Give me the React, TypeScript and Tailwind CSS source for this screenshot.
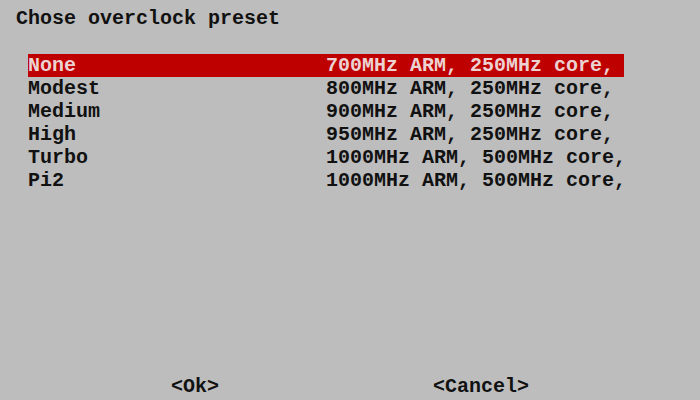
const presets = [
  { name: "None", desc: "700MHz ARM, 250MHz core," },
  { name: "Modest", desc: "800MHz ARM, 250MHz core," },
  { name: "Medium", desc: "900MHz ARM, 250MHz core," },
  { name: "High", desc: "950MHz ARM, 250MHz core," },
  { name: "Turbo", desc: "1000MHz ARM, 500MHz core," },
  { name: "Pi2", desc: "1000MHz ARM, 500MHz core," },
];

export default function App() {
  return (
    <div
      className="w-[700px] h-[400px] bg-[#bdbdbd] text-[#111] flex flex-col font-bold text-[20px] leading-[23px] whitespace-pre"
      style={{ fontFamily: '"Liberation Mono", "Courier New", monospace' }}
    >
      <div className="pl-[16px] pt-[7px]">Chose overclock preset</div>

      <div className="pl-[28px] mt-[24px] flex flex-col">
        {presets.map((p, i) => (
          <div
            key={p.name}
            className={
              i === 0
                ? "w-[596px] flex bg-[#bf0000] text-[#ecd2d2]"
                : "w-[596px] flex"
            }
          >
            <span className="w-[298px] shrink-0">{p.name}</span>
            <span className="shrink-0">{p.desc}</span>
          </div>
        ))}
      </div>

      <div className="mt-auto mb-[2px] flex">
        <span className="ml-[171px]">&lt;Ok&gt;</span>
        <span className="ml-[214px]">&lt;Cancel&gt;</span>
      </div>
    </div>
  );
}
